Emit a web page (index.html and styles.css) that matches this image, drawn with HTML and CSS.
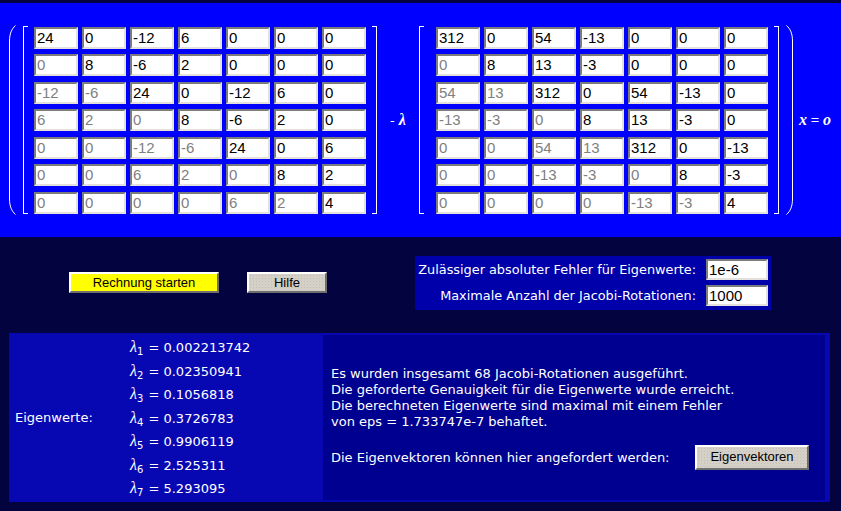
FILE: index.html
```html
<!DOCTYPE html>
<html>
<head>
<meta charset="utf-8">
<link rel="stylesheet" href="styles.css">
</head>
<body>
<div class="eq">
  <svg class="paren" width="8" height="190" viewBox="0 0 8 190"><path d="M7.5 0.5 C3.5 4 1.5 9 1.5 16 L1.5 174 C1.5 181 3.5 186 7.5 189.5" fill="none" stroke="#fff" stroke-width="1"/></svg>
  <div class="sqb sqb-l"></div>
  <div class="matrix">
    <span class="c">24</span><span class="c">0</span><span class="c">-12</span><span class="c">6</span><span class="c">0</span><span class="c">0</span><span class="c">0</span>
    <span class="c g">0</span><span class="c">8</span><span class="c">-6</span><span class="c">2</span><span class="c">0</span><span class="c">0</span><span class="c">0</span>
    <span class="c g">-12</span><span class="c g">-6</span><span class="c">24</span><span class="c">0</span><span class="c">-12</span><span class="c">6</span><span class="c">0</span>
    <span class="c g">6</span><span class="c g">2</span><span class="c g">0</span><span class="c">8</span><span class="c">-6</span><span class="c">2</span><span class="c">0</span>
    <span class="c g">0</span><span class="c g">0</span><span class="c g">-12</span><span class="c g">-6</span><span class="c">24</span><span class="c">0</span><span class="c">6</span>
    <span class="c g">0</span><span class="c g">0</span><span class="c g">6</span><span class="c g">2</span><span class="c g">0</span><span class="c">8</span><span class="c">2</span>
    <span class="c g">0</span><span class="c g">0</span><span class="c g">0</span><span class="c g">0</span><span class="c g">6</span><span class="c g">2</span><span class="c">4</span>
  </div>
  <div class="sqb sqb-r"></div>
  <div class="minus">- <i>λ</i></div>
  <div class="sqb sqb-l sqb-l2"></div>
  <div class="matrix m2">
    <span class="c">312</span><span class="c">0</span><span class="c">54</span><span class="c">-13</span><span class="c">0</span><span class="c">0</span><span class="c">0</span>
    <span class="c g">0</span><span class="c">8</span><span class="c">13</span><span class="c">-3</span><span class="c">0</span><span class="c">0</span><span class="c">0</span>
    <span class="c g">54</span><span class="c g">13</span><span class="c">312</span><span class="c">0</span><span class="c">54</span><span class="c">-13</span><span class="c">0</span>
    <span class="c g">-13</span><span class="c g">-3</span><span class="c g">0</span><span class="c">8</span><span class="c">13</span><span class="c">-3</span><span class="c">0</span>
    <span class="c g">0</span><span class="c g">0</span><span class="c g">54</span><span class="c g">13</span><span class="c">312</span><span class="c">0</span><span class="c">-13</span>
    <span class="c g">0</span><span class="c g">0</span><span class="c g">-13</span><span class="c g">-3</span><span class="c g">0</span><span class="c">8</span><span class="c">-3</span>
    <span class="c g">0</span><span class="c g">0</span><span class="c g">0</span><span class="c g">0</span><span class="c g">-13</span><span class="c g">-3</span><span class="c">4</span>
  </div>
  <div class="sqb sqb-r"></div>
  <svg class="paren paren-r" width="8" height="190" viewBox="0 0 8 190"><path d="M0.5 0.5 C4.5 4 6.5 9 6.5 16 L6.5 174 C6.5 181 4.5 186 0.5 189.5" fill="none" stroke="#fff" stroke-width="1"/></svg>
  <div class="xo"><i>x</i> = <b><i>o</i></b></div>
</div>

<div class="controls">
  <button class="btn btn-yellow">Rechnung starten</button>
  <button class="btn btn-gray btn-help">Hilfe</button>
  <div class="params">
    <div class="prow"><span>Zulässiger absoluter Fehler für Eigenwerte:</span><span class="field">1e-6</span></div>
    <div class="prow"><span>Maximale Anzahl der Jacobi-Rotationen:</span><span class="field">1000</span></div>
  </div>
</div>

<div class="result">
  <div class="rleft">
    <div class="elabel">Eigenwerte:</div>
    <div class="lams">
      <div class="lam"><i>λ</i><sub>1</sub> = 0.002213742</div>
      <div class="lam"><i>λ</i><sub>2</sub> = 0.02350941</div>
      <div class="lam"><i>λ</i><sub>3</sub> = 0.1056818</div>
      <div class="lam"><i>λ</i><sub>4</sub> = 0.3726783</div>
      <div class="lam"><i>λ</i><sub>5</sub> = 0.9906119</div>
      <div class="lam"><i>λ</i><sub>6</sub> = 2.525311</div>
      <div class="lam"><i>λ</i><sub>7</sub> = 5.293095</div>
    </div>
  </div>
  <div class="rright">
    <p class="msg">Es wurden insgesamt 68 Jacobi-Rotationen ausgeführt.<br>Die geforderte Genauigkeit für die Eigenwerte wurde erreicht.<br>Die berechneten Eigenwerte sind maximal mit einem Fehler<br>von eps = 1.733747e-7 behaftet.</p>
    <div class="evrow"><span class="evtext">Die Eigenvektoren können hier angefordert werden:</span><button class="btn btn-gray btn-ev">Eigenvektoren</button></div>
  </div>
</div>
</body>
</html>
```

FILE: styles.css
```css
html, body {
  margin: 0;
  padding: 0;
}
body {
  background: #03033f;
  width: 841px;
  height: 511px;
  overflow: hidden;
  font-family: "DejaVu Sans", sans-serif;
  font-size: 13px;
  color: #fff;
}

/* equation band */
.eq {
  margin-top: 3px;
  height: 234px;
  background: #0000ff;
  display: flex;
  align-items: center;
  padding-left: 8px;
  box-sizing: border-box;
}
.paren {
  display: block;
  flex: none;
}
.sqb {
  flex: none;
  width: 5px;
  height: 188px;
  box-sizing: border-box;
  border-top: 1px solid #fff;
  border-bottom: 1px solid #fff;
}
.sqb-l {
  border-left: 1px solid #fff;
  margin-left: 7px;
}
.sqb-l2 {
  margin-left: 0;
}
.sqb-r {
  border-right: 1px solid #fff;
  margin-left: 6px;
}
.matrix {
  flex: none;
  margin-left: 6px;
  display: grid;
  grid-template-columns: repeat(7, 44px);
  grid-auto-rows: 22px;
  column-gap: 4px;
  row-gap: 5.5px;
}
.m2 {
  margin-left: 12px;
}
.c, .field {
  box-sizing: border-box;
  background: #fff;
  border-style: solid;
  border-width: 2px;
  border-color: #7c7c7c #e4e1dc #e4e1dc #7c7c7c;
  font-family: "Liberation Sans", Arial, sans-serif;
  font-size: 15px;
  line-height: 18px;
  padding-left: 1px;
  color: #000;
  white-space: nowrap;
  overflow: hidden;
}
.c.g {
  color: #808080;
}
.minus {
  flex: none;
  width: 42px;
  text-align: center;
  font-size: 13px;
  line-height: 16px;
}
.minus i, .xo i, .lam i {
  font-family: "Liberation Serif", "Times New Roman", serif;
  font-style: italic;
}
.minus i {
  font-size: 16px;
  font-weight: bold;
}
.paren-r {
  margin-left: 7px;
}
.xo {
  flex: none;
  margin-left: 5px;
  font-family: "Liberation Serif", "Times New Roman", serif;
  font-size: 15px;
  font-weight: bold;
  white-space: nowrap;
}
.xo i {
  font-size: 16px;
}

/* controls */
.controls {
  height: 96px;
  display: flex;
  align-items: flex-start;
}
.btn {
  box-sizing: border-box;
  height: 21px;
  margin: 35px 0 0 0;
  padding: 0;
  border-style: solid;
  border-width: 2px;
  border-color: #fff #6e6e6e #6e6e6e #fff;
  font-family: "Liberation Sans", Arial, sans-serif;
  font-size: 13px;
  color: #000;
  line-height: 16px;
}
.btn-yellow {
  margin-left: 69px;
  width: 150px;
  background: #ffff00;
}
.btn-gray {
  background-color: #d4d0c8;
  background-image: radial-gradient(circle, #c4c0b8 0.7px, transparent 0.9px);
  background-size: 3px 3px;
}
.btn-help {
  margin-left: 28px;
  width: 80px;
}
.params {
  margin: 19px 0 0 88px;
  width: 356px;
  height: 54px;
  box-sizing: border-box;
  background: #0000aa;
  padding: 3px 3px 0 0;
  display: flex;
  flex-direction: column;
  align-items: flex-end;
  gap: 5px;
}
.prow {
  display: flex;
  align-items: center;
  gap: 10px;
  white-space: nowrap;
  font-size: 12.85px;
}
.field {
  width: 62px;
  height: 21px;
  line-height: 17px;
}

/* results */
.result {
  margin-left: 9px;
  width: 821px;
  height: 169px;
  box-sizing: border-box;
  background: #0808b2;
  padding: 2px 5px 2px 0;
  display: flex;
}
.rleft {
  width: 314px;
  flex: none;
  display: flex;
  align-items: center;
}
.elabel {
  width: 121px;
  padding-left: 6px;
  box-sizing: border-box;
  flex: none;
}
.lams {
  flex: none;
}
.lam {
  height: 23.6px;
  line-height: 23.6px;
  white-space: nowrap;
}
.lam i {
  font-size: 16px;
}
.lam sub {
  font-size: 10px;
  vertical-align: -3px;
  line-height: 0;
  margin-right: 1px;
}
.rright {
  flex: 1;
  background: #000090;
  padding-left: 8px;
  display: flex;
  flex-direction: column;
  justify-content: center;
  gap: 15px;
}
.msg {
  margin: 0;
  line-height: 16px;
  white-space: nowrap;
}
.evrow {
  display: flex;
  align-items: center;
}
.evtext {
  width: 364px;
  flex: none;
  white-space: nowrap;
}
.btn-ev {
  margin: 0;
  width: 114px;
  height: 25px;
}
```
